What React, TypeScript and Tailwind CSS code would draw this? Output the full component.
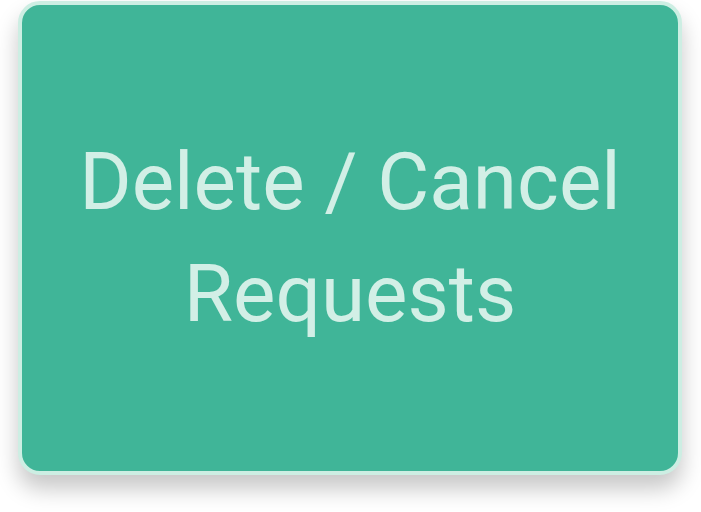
import React from "react";

const App = () => {
  return (
    <div className="w-[701px] h-[512px] bg-white pt-px pl-[18px]">
      <div className="w-[664px] h-[474px] rounded-[22px] border-4 border-[#cdeee3] bg-[#40b598] shadow-[0_14px_22px_rgba(0,0,0,0.22)] flex items-center justify-center">
        <p className="text-center text-[80px] leading-[112px] text-[#d2efe6] font-['Roboto',sans-serif]">
          Delete / Cancel
          <br />
          Requests
        </p>
      </div>
    </div>
  );
};

export default App;
